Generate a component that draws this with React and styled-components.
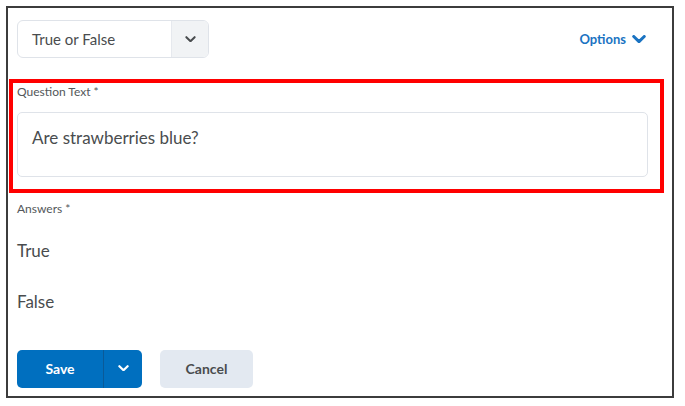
import React from 'react';
import styled, { createGlobalStyle } from 'styled-components';

const GlobalStyle = createGlobalStyle`
  body {
    margin: 0;
    background: #ffffff;
    font-family: Lato, 'Open Sans', sans-serif;
    color: #494c4e;
  }
`;

const Frame = styled.div`
  box-sizing: border-box;
  margin: 6px 0 0 6px;
  width: 668px;
  height: 392px;
  border: 2px solid #3c3c3c;
  padding-top: 12px;
`;

const TopRow = styled.div`
  display: flex;
  align-items: center;
  justify-content: space-between;
  margin: 0 26px 0 9px;
`;

const Select = styled.div`
  box-sizing: border-box;
  display: flex;
  width: 192px;
  height: 38px;
  border: 1px solid #dfe3e9;
  border-radius: 6px;
  overflow: hidden;
`;

const SelectValue = styled.div`
  flex: 1;
  display: flex;
  align-items: center;
  padding-left: 14px;
  font-size: 15px;
  color: #494c4e;
`;

const SelectToggle = styled.div`
  width: 36px;
  display: flex;
  align-items: center;
  justify-content: center;
  background: #f1f3f5;
  border-left: 1px solid #e6e9ee;
`;

const OptionsLink = styled.div`
  display: flex;
  align-items: center;
  gap: 6px;
  font-size: 13px;
  font-weight: 700;
  color: #1a73c2;
`;

const Highlight = styled.div`
  box-sizing: border-box;
  margin: 21px 8px 0 1px;
  border: 4px solid #ff0000;
  padding: 1px 12px 12px 4px;
`;

const FieldLabel = styled.div`
  font-size: 12px;
  line-height: 15px;
  color: #53575a;
  margin-top: ${(p) => p.$top || 0}px;
`;

const TextBox = styled.div`
  box-sizing: border-box;
  margin-top: 13px;
  height: 65px;
  border: 1px solid #dfe3e9;
  border-radius: 5px;
  padding: 15px 14px 0;
  font-size: 17px;
  line-height: 20px;
  color: #494c4e;
`;

const Body = styled.div`
  padding-left: 9px;
`;

const AnswerList = styled.div`
  margin-top: 9px;
`;

const Answer = styled.div`
  font-size: 17px;
  line-height: 51px;
  color: #494c4e;
`;

const Actions = styled.div`
  display: flex;
  gap: 18px;
  margin-top: 23px;
`;

const SplitButton = styled.div`
  display: flex;
  height: 38px;
  border-radius: 5px;
  overflow: hidden;
  background: #006fbf;
`;

const ButtonPart = styled.div`
  box-sizing: border-box;
  width: ${(p) => p.$width}px;
  display: flex;
  align-items: center;
  justify-content: center;
  padding-bottom: 2px;
  color: #ffffff;
  font-size: 14px;
  font-weight: 700;
  border-left: ${(p) => (p.$divider ? '1px solid #0a5a98' : 'none')};
`;

const SecondaryButton = styled.div`
  box-sizing: border-box;
  width: 93px;
  height: 38px;
  border-radius: 5px;
  background: #e3e9f1;
  display: flex;
  align-items: center;
  justify-content: center;
  padding-bottom: 2px;
  font-size: 14px;
  font-weight: 700;
  color: #494c4e;
`;

const Chevron = ({ color, width = 11, stroke = 2.4 }) => (
  <svg width={width} height={width * 0.6} viewBox="0 0 12 7">
    <polyline
      points="1.5,1.2 6,5.6 10.5,1.2"
      fill="none"
      stroke={color}
      strokeWidth={stroke}
      strokeLinecap="round"
      strokeLinejoin="round"
    />
  </svg>
);

export default function App() {
  return (
    <>
      <GlobalStyle />
      <Frame>
        <TopRow>
          <Select>
            <SelectValue>True or False</SelectValue>
            <SelectToggle>
              <Chevron color="#494c4e" width={11} stroke={2.2} />
            </SelectToggle>
          </Select>
          <OptionsLink>
            Options
            <Chevron color="#1a73c2" width={14} stroke={2.6} />
          </OptionsLink>
        </TopRow>

        <Highlight>
          <FieldLabel>Question Text *</FieldLabel>
          <TextBox>Are strawberries blue?</TextBox>
        </Highlight>

        <Body>
          <FieldLabel $top={8}>Answers *</FieldLabel>
          <AnswerList>
            <Answer>True</Answer>
            <Answer>False</Answer>
          </AnswerList>
          <Actions>
            <SplitButton>
              <ButtonPart $width={86}>Save</ButtonPart>
              <ButtonPart $width={39} $divider>
                <Chevron color="#ffffff" width={11} stroke={2.4} />
              </ButtonPart>
            </SplitButton>
            <SecondaryButton>Cancel</SecondaryButton>
          </Actions>
        </Body>
      </Frame>
    </>
  );
}
